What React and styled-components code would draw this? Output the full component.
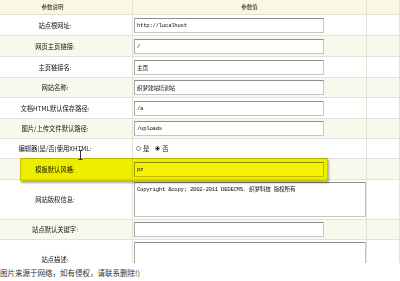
import React from 'react';
import styled, { createGlobalStyle } from 'styled-components';

const GlobalStyle = createGlobalStyle`
  html, body {
    margin: 0;
    padding: 0;
    background: #fff;
  }
  body {
    font-family: "Noto Sans CJK SC", "Noto Sans", sans-serif;
  }
`;

const Page = styled.div`
  position: relative;
  width: 400px;
  height: 281px;
  overflow: hidden;
  background: #fff;
`;

const Row = styled.div`
  display: grid;
  grid-template-columns: 133px 234px 1fr;
  height: ${(p) => p.$h}px;
  box-sizing: border-box;
  border-bottom: 1px solid #e2e2d8;
  background: ${(p) => (p.$head ? '#fbf8e1' : p.$alt ? '#f8f8ed' : '#fff')};
`;

const Cell = styled.div`
  display: flex;
  align-items: center;
  box-sizing: border-box;
  border-right: 1px solid #e2e2d8;
  overflow: hidden;
`;

const HeadCell = styled(Cell)`
  justify-content: center;
  padding-right: ${(p) => (p.$first ? '27px' : '0')};
  font-size: 5.5px;
  color: #222;
`;

const Label = styled(Cell)`
  justify-content: center;
  padding-right: 22px;
  font-size: 6.3px;
  color: #111;
  white-space: nowrap;
`;

const Value = styled(Cell)`
  padding-left: 1px;
`;

const Field = styled.input`
  box-sizing: border-box;
  width: 190px;
  height: 15px;
  margin: 0;
  padding: 0 2px;
  border: 1px solid #c6c6c6;
  border-top-color: #8f8f8f;
  border-left-color: #a9a9a9;
  background: #fff;
  font-family: "Liberation Mono", "Noto Sans CJK SC", monospace;
  font-size: 5.7px;
  letter-spacing: -0.3px;
  color: #111;
  outline: none;
`;

const Area = styled.textarea`
  box-sizing: border-box;
  width: 232px;
  height: 35px;
  margin: 0;
  padding: 3px 2px;
  border: 1px solid #c6c6c6;
  border-top-color: #8f8f8f;
  border-left-color: #a9a9a9;
  background: #fff;
  font-family: "Liberation Mono", "Noto Sans CJK SC", monospace;
  font-size: 5.7px;
  letter-spacing: -0.3px;
  line-height: 7px;
  color: #111;
  resize: none;
  overflow: hidden;
  outline: none;
`;

const RadioGroup = styled.div`
  display: flex;
  align-items: center;
  padding-left: 2px;
  font-size: 6.3px;
  color: #111;
`;

const Radio = styled.span`
  width: 5px;
  height: 5px;
  box-sizing: border-box;
  border-radius: 50%;
  border: 1px solid #8a8a8a;
  margin-right: 2px;
  margin-left: ${(p) => (p.$gap ? '6px' : '0')};
  background: ${(p) => (p.$on ? 'radial-gradient(circle, #111 0 1.2px, #fff 1.4px)' : '#fff')};
`;

const Highlight = styled.div`
  position: absolute;
  left: 20px;
  top: 158px;
  width: 308px;
  height: 23px;
  box-sizing: border-box;
  background: #f4f400;
  border: 1px solid #d0ce00;
  box-shadow: 1px 2px 2px rgba(0, 0, 0, 0.35);
  mix-blend-mode: multiply;
  pointer-events: none;
`;

const Cursor = styled.svg`
  position: absolute;
  left: 78px;
  top: 150px;
`;

const Caption = styled.div`
  position: absolute;
  left: 0;
  right: 0;
  bottom: 0;
  height: 18px;
  display: flex;
  align-items: center;
  background: #fff;
  font-size: 7.5px;
  color: #333;
  white-space: nowrap;
`;

const rows = [
  { label: '站点根网址:', value: 'http://localhost', h: 21 },
  { label: '网页主页链接:', value: '/', h: 21 },
  { label: '主页链接名:', value: '主页', h: 21 },
  { label: '网站名称:', value: '织梦建站培训站', h: 20 },
  { label: '文档HTML默认保存路径:', value: '/a', h: 21 },
  { label: '图片/上传文件默认路径:', value: '/uploads', h: 20 },
  { label: '编辑器(是/否)使用XHTML:', radio: true, h: 20 },
  { label: '模板默认风格:', value: 'pz', h: 21 },
  { label: '网站版权信息:', area: 'Copyright &copy; 2002-2011 DEDECMS. 织梦科技 版权所有', h: 40 },
  { label: '站点默认关键字:', value: '', h: 20 },
  { label: '站点描述:', area: '', h: 40 },
];

export default function App() {
  return (
    <Page>
      <GlobalStyle />
      <Row $head $h={15}>
        <HeadCell $first>参数说明</HeadCell>
        <HeadCell>参数值</HeadCell>
        <HeadCell />
      </Row>
      {rows.map((r, i) => (
        <Row key={r.label} $h={r.h} $alt={i % 2 === 1}>
          <Label>{r.label}</Label>
          <Value>
            {r.radio ? (
              <RadioGroup>
                <Radio />是
                <Radio $gap $on />否
              </RadioGroup>
            ) : r.area !== undefined ? (
              <Area readOnly value={r.area} />
            ) : (
              <Field readOnly value={r.value} />
            )}
          </Value>
          <Cell />
        </Row>
      ))}
      <Highlight />
      <Cursor width="5" height="10" viewBox="0 0 5 10">
        <path d="M0.5 0.5h4M2.5 0.5v9M0.5 9.5h4" stroke="#333" strokeWidth="1" fill="none" />
      </Cursor>
      <Caption>图片来源于网络，如有侵权，请联系删除!)</Caption>
    </Page>
  );
}
